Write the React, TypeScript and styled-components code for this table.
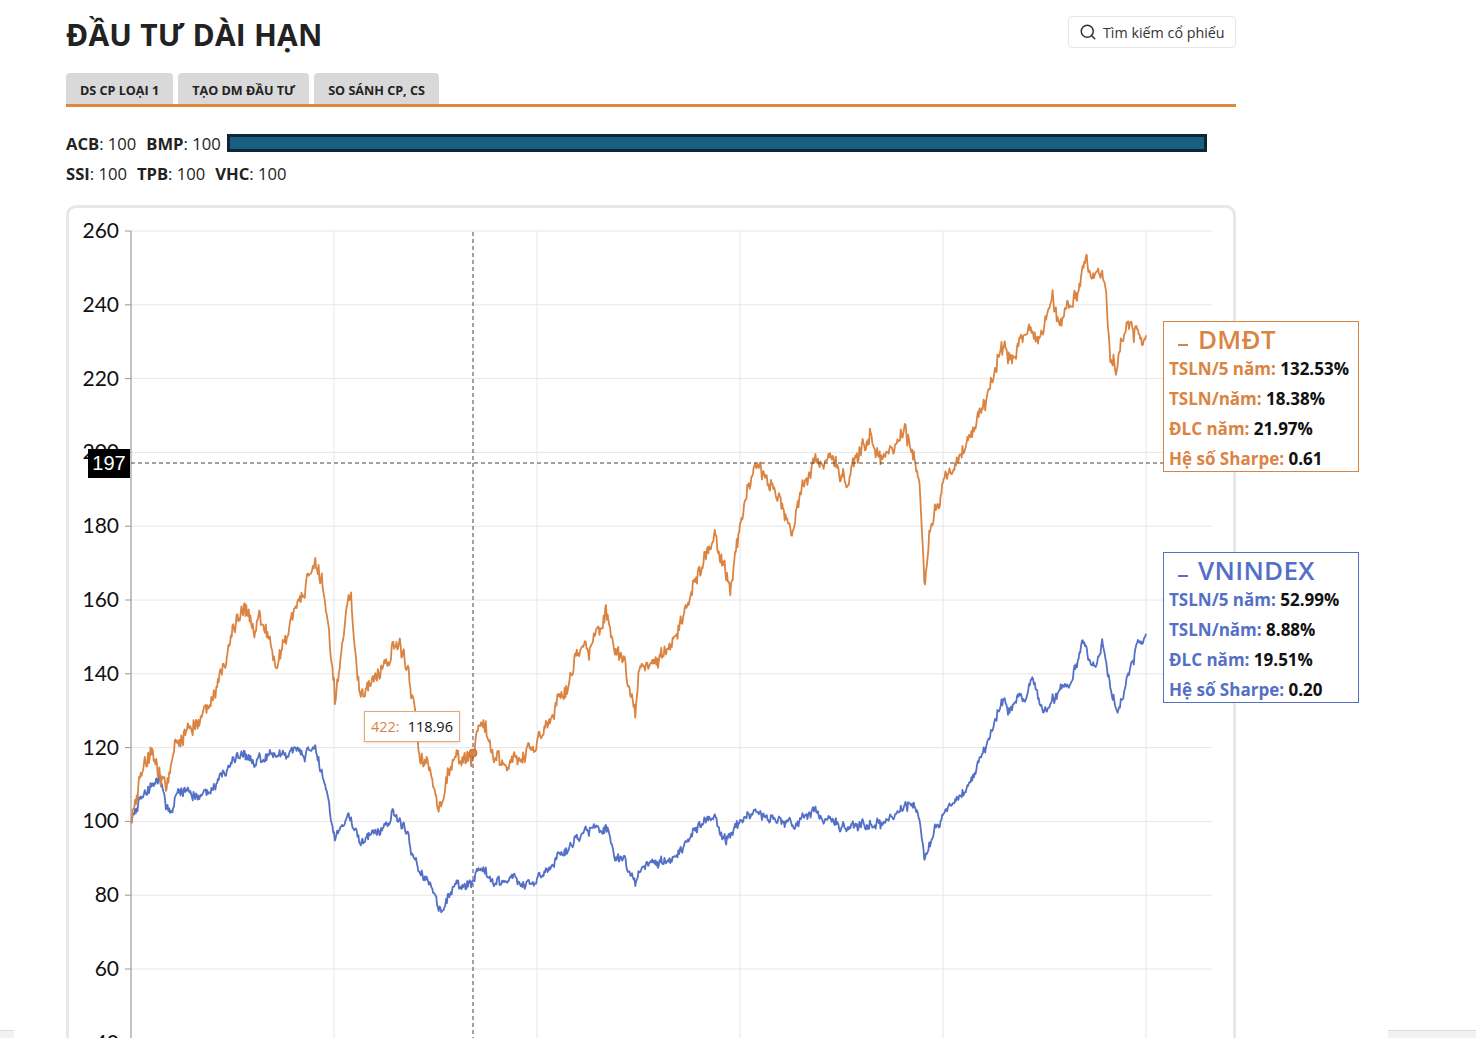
import React from "react";
import styled, { createGlobalStyle } from "styled-components";
import { Search } from "lucide-react";

const ORANGE = "#db8442";
const BLUE = "#5470c6";

const GlobalStyle = createGlobalStyle`
  html, body {
    margin: 0;
    padding: 0;
    background: #ffffff;
    overflow: hidden;
  }
  body {
    font-family: "Open Sans", "Noto Sans", sans-serif;
    color: #222;
  }
`;

const Page = styled.div`
  padding-left: 66px;
  width: 1170px;
`;

const Header = styled.header`
  display: flex;
  justify-content: space-between;
  align-items: flex-start;
  padding-top: 16px;
  height: 38px;
`;

const Title = styled.h1`
  margin: 0;
  font-size: 30px;
  line-height: 38px;
  font-weight: 700;
  color: #222;
  letter-spacing: 0.2px;
`;

const SearchBox = styled.div`
  display: flex;
  align-items: center;
  gap: 6px;
  box-sizing: border-box;
  width: 168px;
  height: 32px;
  padding: 0 10px;
  border: 1px solid #e6e6e6;
  border-radius: 4px;
  font-size: 14.3px;
  color: #333;
`;

const Tabs = styled.nav`
  display: flex;
  gap: 5px;
  margin-top: 19px;
  border-bottom: 3px solid #e0873a;
`;

const Tab = styled.div`
  display: flex;
  align-items: center;
  justify-content: center;
  box-sizing: border-box;
  height: 31px;
  padding: 3px 14px 0;
  background: #d9d9d9;
  border-radius: 4px 4px 0 0;
  font-size: 12.6px;
  font-weight: 700;
  color: #222;
`;

const StockRow = styled.div<{ $first?: boolean }>`
  display: flex;
  align-items: center;
  gap: 10px;
  height: 30px;
  margin-top: ${(p) => (p.$first ? "21px" : "0")};
  font-size: 16.6px;
`;

const Stock = styled.span`
  color: #222;
  b {
    font-weight: 700;
  }
`;

const Bar = styled.div`
  box-sizing: border-box;
  width: 980px;
  height: 18px;
  margin-left: -4px;
  background: #1a5e80;
  border: 3px solid #0b2738;
`;

const Card = styled.section`
  position: relative;
  box-sizing: border-box;
  margin-top: 17px;
  height: 900px;
  border: 3px solid #e8e8e8;
  border-radius: 10px;
  svg {
    display: block;
  }
`;

const Legend = styled.div<{ $color: string; $top: number }>`
  position: absolute;
  left: 1094px;
  top: ${(p) => p.$top}px;
  box-sizing: border-box;
  width: 196px;
  height: 151px;
  padding: 2px 5px 0;
  background: #fff;
  border: 1px solid ${(p) => p.$color};
  font-size: 17px;
  font-weight: 700;
  line-height: 30px;
  white-space: nowrap;
  color: ${(p) => p.$color};
`;

const LegendTitle = styled.div`
  display: flex;
  align-items: center;
  height: 30px;
  font-size: 26px;
  font-weight: 600;
  letter-spacing: 0.3px;
`;

const Dash = styled.span<{ $color: string }>`
  display: inline-block;
  width: 10px;
  height: 2px;
  margin: 12px 10px 0 9px;
  background: ${(p) => p.$color};
`;

const Value = styled.span`
  color: #111;
`;

const CrossLabel = styled.div`
  position: absolute;
  left: 19px;
  top: 241px;
  width: 42px;
  height: 29px;
  display: flex;
  align-items: center;
  justify-content: center;
  background: #000;
  color: #fff;
  font-family: "Liberation Sans", Arial, sans-serif;
  font-size: 20px;
`;

const Tip = styled.div`
  position: absolute;
  left: 295px;
  top: 503px;
  box-sizing: border-box;
  width: 96px;
  height: 31px;
  display: flex;
  align-items: center;
  gap: 8px;
  padding-left: 6px;
  background: #fff;
  border: 1px solid #e7a877;
  box-shadow: 0 1px 3px rgba(0, 0, 0, 0.12);
  font-size: 14.5px;
  color: #111;
  span {
    color: ${ORANGE};
  }
`;

const FooterStrip = styled.div<{ $side: "left" | "right"; $w: number }>`
  position: fixed;
  bottom: 0;
  ${(p) => p.$side}: 0;
  width: ${(p) => p.$w}px;
  height: 7px;
  background: #f2f2f2;
  border-top: 1px solid #dcdcdc;
`;

// rough shape of both series, in page pixels
const orangeKeys: [number, number][] = [
  [131, 820], [138, 790], [145, 760], [152, 752], [160, 775], [167, 785], [175, 750], [185, 735],
  [195, 728], [205, 710], [213, 695], [222, 672], [230, 640], [238, 620], [246, 603], [254, 628],
  [262, 618], [270, 640], [277, 658], [285, 640], [293, 615], [302, 598], [310, 575], [315, 560],
  [322, 580], [328, 625], [335, 705], [341, 655], [346, 615], [351, 600], [357, 668], [364, 700],
  [372, 690], [380, 675], [390, 660], [400, 645], [408, 672], [414, 700], [420, 760], [428, 765],
  [435, 790], [441, 812], [447, 770], [455, 758], [463, 762], [473, 753], [480, 725], [486, 735],
  [492, 752], [500, 765], [508, 768], [516, 762], [525, 752], [535, 745], [545, 728], [555, 712],
  [565, 692], [573, 668], [580, 650], [590, 652], [598, 630], [606, 615], [614, 648], [622, 662],
  [630, 690], [635, 712], [640, 665], [648, 668], [658, 656], [668, 645], [678, 633], [688, 608],
  [697, 575], [705, 555], [715, 540], [722, 552], [730, 590], [738, 540], [745, 505], [752, 478],
  [760, 468], [768, 480], [776, 492], [783, 505], [791, 538], [797, 500], [805, 482], [815, 470],
  [823, 462], [832, 462], [840, 475], [848, 488], [856, 458], [863, 448], [871, 432], [878, 462],
  [886, 455], [895, 445], [905, 430], [912, 455], [919, 478], [925, 592], [930, 525], [937, 505],
  [945, 472], [953, 470], [962, 455], [970, 438], [978, 418], [986, 400], [993, 380], [1000, 350],
  [1008, 345], [1015, 358], [1022, 345], [1030, 330], [1037, 345], [1044, 325], [1052, 302],
  [1060, 318], [1068, 308], [1075, 300], [1082, 270], [1087, 258], [1094, 275], [1101, 268],
  [1106, 290], [1110, 355], [1116, 372], [1122, 335], [1130, 322], [1138, 338], [1146, 330],
];

const blueKeys: [number, number][] = [
  [131, 820], [138, 805], [146, 790], [153, 785], [160, 776], [166, 805], [172, 815], [178, 792],
  [186, 792], [195, 798], [205, 793], [215, 785], [225, 770], [235, 760], [245, 752], [255, 762],
  [265, 757], [275, 748], [285, 755], [295, 750], [305, 756], [315, 745], [321, 770], [327, 792],
  [334, 842], [340, 828], [348, 820], [356, 828], [364, 845], [372, 838], [382, 832], [392, 818],
  [400, 822], [407, 832], [414, 858], [422, 876], [430, 885], [436, 895], [441, 915], [447, 895],
  [455, 885], [465, 888], [473, 878], [480, 870], [490, 880], [500, 885], [510, 880], [520, 882],
  [530, 884], [540, 876], [550, 868], [560, 858], [570, 845], [580, 838], [590, 830], [600, 828],
  [608, 832], [615, 858], [623, 862], [630, 872], [635, 882], [642, 868], [652, 862], [662, 860],
  [672, 858], [682, 852], [692, 836], [700, 822], [710, 818], [718, 822], [726, 840], [733, 830],
  [742, 822], [752, 816], [762, 815], [772, 818], [782, 820], [792, 824], [800, 818], [810, 815],
  [820, 818], [830, 822], [840, 828], [850, 830], [860, 825], [870, 824], [880, 826], [890, 818],
  [900, 810], [910, 805], [918, 812], [925, 862], [932, 835], [940, 818], [948, 805], [958, 800],
  [967, 790], [975, 772], [983, 752], [990, 738], [997, 715], [1003, 700], [1010, 705],
  [1018, 700], [1025, 705], [1032, 678], [1040, 705], [1047, 712], [1054, 700], [1061, 682],
  [1068, 690], [1075, 670], [1082, 640], [1089, 655], [1096, 668], [1102, 640], [1108, 672],
  [1113, 700], [1118, 712], [1124, 690], [1131, 665], [1138, 645], [1146, 630],
];

const N = 1250;
const X0 = 131;
const X1 = 1146;

function interp(keys: [number, number][], x: number) {
  for (let k = 1; k < keys.length; k++) {
    if (x <= keys[k][0]) {
      const [xa, ya] = keys[k - 1];
      const [xb, yb] = keys[k];
      const t = (x - xa) / (xb - xa || 1);
      return ya + (yb - ya) * t;
    }
  }
  return keys[keys.length - 1][1];
}

function makeRandom(seed: number) {
  let s = seed;
  return () => {
    s = (s * 1103515245 + 12345) % 2147483648;
    return s / 2147483648;
  };
}

function buildSeries() {
  const rnd = makeRandom(42);
  const orange: [number, number][] = [];
  const blue: [number, number][] = [];
  let n = 0;
  for (let i = 0; i <= N; i++) {
    const x = X0 + (i * (X1 - X0)) / N;
    n = n * 0.7 + (rnd() - 0.5) * 8;
    const spike = (rnd() - 0.5) * 7;
    const common = n + spike;
    const own = (rnd() - 0.5) * 6;
    orange.push([x, interp(orangeKeys, x) + common * 1.3 + own]);
    blue.push([x, interp(blueKeys, x) + common * 0.85 + own * 0.4]);
  }
  return { orange, blue };
}

function toPath(pts: [number, number][]) {
  return pts.map(([x, y], i) => `${i ? "L" : "M"}${x.toFixed(1)} ${y.toFixed(1)}`).join("");
}

const yOf = (v: number) => 231 + (260 - v) * 3.69;
const ticks = [260, 240, 220, 200, 180, 160, 140, 120, 100, 80, 60, 40];
const vLines = [1, 2, 3, 4, 5].map((k) => 131 + 203 * k);

const Chart = () => {
  const { orange, blue } = React.useMemo(buildSeries, []);
  return (
    <svg width={1164} height={894} viewBox="69 208 1164 894">
      {ticks.map((t) => (
        <g key={t}>
          <line x1={131} x2={1212} y1={yOf(t)} y2={yOf(t)} stroke="#e6e6e6" strokeWidth={1} />
          <line x1={125} x2={131} y1={yOf(t)} y2={yOf(t)} stroke="#999" strokeWidth={1} />
          <text
            x={119}
            y={yOf(t) + 7}
            textAnchor="end"
            fontFamily="Lato, 'Open Sans', sans-serif"
            fontSize={21}
            fill="#111"
          >
            {t}
          </text>
        </g>
      ))}
      {vLines.map((x) => (
        <line key={x} x1={x} x2={x} y1={231} y2={1102} stroke="#e6e6e6" strokeWidth={1} />
      ))}
      <line x1={131} x2={131} y1={231} y2={1102} stroke="#9a9a9a" strokeWidth={1.2} />
      <path d={toPath(blue)} fill="none" stroke={BLUE} strokeWidth={1.8} strokeLinejoin="round" />
      <path d={toPath(orange)} fill="none" stroke={ORANGE} strokeWidth={1.8} strokeLinejoin="round" />
      <line x1={473} x2={473} y1={232} y2={1102} stroke="#444" strokeWidth={1} strokeDasharray="4 3" />
      <line x1={131} x2={1212} y1={463} y2={463} stroke="#444" strokeWidth={1} strokeDasharray="4 3" />
      <circle cx={473} cy={753} r={4} fill={ORANGE} stroke="#c66f2e" strokeWidth={1} />
    </svg>
  );
};

type Stat = { label: string; value: string };

const dmdtStats: Stat[] = [
  { label: "TSLN/5 năm:", value: "132.53%" },
  { label: "TSLN/năm:", value: "18.38%" },
  { label: "ĐLC năm:", value: "21.97%" },
  { label: "Hệ số Sharpe:", value: "0.61" },
];

const vnStats: Stat[] = [
  { label: "TSLN/5 năm:", value: "52.99%" },
  { label: "TSLN/năm:", value: "8.88%" },
  { label: "ĐLC năm:", value: "19.51%" },
  { label: "Hệ số Sharpe:", value: "0.20" },
];

const LegendBox = ({ name, color, top, stats }: { name: string; color: string; top: number; stats: Stat[] }) => (
  <Legend $color={color} $top={top}>
    <LegendTitle>
      <Dash $color={color} />
      {name}
    </LegendTitle>
    {stats.map((s) => (
      <div key={s.label}>
        {s.label} <Value>{s.value}</Value>
      </div>
    ))}
  </Legend>
);

const App = () => {
  return (
    <>
      <GlobalStyle />
      <Page>
        <Header>
          <Title>ĐẦU TƯ DÀI HẠN</Title>
          <SearchBox>
            <Search size={18} strokeWidth={2} color="#333" />
            Tìm kiếm cổ phiếu
          </SearchBox>
        </Header>
        <Tabs>
          <Tab>DS CP LOẠI 1</Tab>
          <Tab>TẠO DM ĐẦU TƯ</Tab>
          <Tab>SO SÁNH CP, CS</Tab>
        </Tabs>
        <StockRow $first>
          <Stock>
            <b>ACB</b>: 100
          </Stock>
          <Stock>
            <b>BMP</b>: 100
          </Stock>
          <Bar />
        </StockRow>
        <StockRow>
          <Stock>
            <b>SSI</b>: 100
          </Stock>
          <Stock>
            <b>TPB</b>: 100
          </Stock>
          <Stock>
            <b>VHC</b>: 100
          </Stock>
        </StockRow>
        <Card>
          <Chart />
          <CrossLabel>197</CrossLabel>
          <Tip>
            <span>422:</span>118.96
          </Tip>
          <LegendBox name="DMĐT" color={ORANGE} top={113} stats={dmdtStats} />
          <LegendBox name="VNINDEX" color={BLUE} top={344} stats={vnStats} />
        </Card>
      </Page>
      <FooterStrip $side="left" $w={14} />
      <FooterStrip $side="right" $w={88} />
    </>
  );
};

export default App;
